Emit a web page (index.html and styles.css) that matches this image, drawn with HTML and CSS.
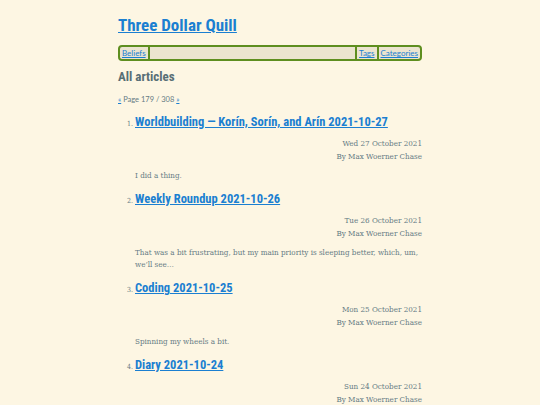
FILE: index.html
```html
<!DOCTYPE html>
<html lang="en">
<head>
<meta charset="utf-8">
<title>Three Dollar Quill</title>
<link rel="stylesheet" href="styles.css">
</head>
<body>
<div class="page">
  <header class="site-header">
    <h1 class="site-title"><a href="#">Three Dollar Quill</a></h1>
    <nav class="nav">
      <a class="nav-item sep-right" href="#">Beliefs</a>
      <span class="nav-fill"></span>
      <a class="nav-item sep-left sep-right" href="#">Tags</a>
      <a class="nav-item" href="#">Categories</a>
    </nav>
  </header>
  <main>
    <h2 class="section-title">All articles</h2>
    <p class="pager"><a href="#">«</a> Page 179 / 308 <a href="#">»</a></p>
    <ol class="articles" start="1">
      <li class="article">
        <h3 class="article-title"><a href="#">Worldbuilding — Korín, Sorín, and Arín 2021-10-27</a></h3>
        <div class="meta"><div>Wed 27 October 2021</div><div>By Max Woerner Chase</div></div>
        <p class="summary">I did a thing.</p>
      </li>
      <li class="article">
        <h3 class="article-title"><a href="#">Weekly Roundup 2021-10-26</a></h3>
        <div class="meta"><div>Tue 26 October 2021</div><div>By Max Woerner Chase</div></div>
        <p class="summary">That was a bit frustrating, but my main priority is sleeping better, which, um, we’ll see…</p>
      </li>
      <li class="article">
        <h3 class="article-title"><a href="#">Coding 2021-10-25</a></h3>
        <div class="meta"><div>Mon 25 October 2021</div><div>By Max Woerner Chase</div></div>
        <p class="summary">Spinning my wheels a bit.</p>
      </li>
      <li class="article">
        <h3 class="article-title"><a href="#">Diary 2021-10-24</a></h3>
        <div class="meta"><div>Sun 24 October 2021</div><div>By Max Woerner Chase</div></div>
        <p class="summary">Another day.</p>
      </li>
    </ol>
  </main>
</div>
</body>
</html>
```

FILE: styles.css
```css
html, body {
  margin: 0;
  padding: 0;
  background: #fdf6e3;
}
body {
  color: #657b83;
  font-family: "DejaVu Serif", serif;
  font-stretch: condensed;
  font-size: 8px;
}
a {
  color: #1b7fd1;
}
.page {
  width: 304px;
  margin: 0 auto;
}
.site-header {
  padding-top: 14px;
}
.site-title {
  margin: 0;
  font-family: Roboto, "Open Sans", sans-serif;
  font-size: 17px;
  line-height: 22px;
  font-weight: 700;
}
.nav {
  margin-top: 9px;
  display: flex;
  height: 12px;
  border: 2px solid #5e8e1f;
  border-radius: 4px;
  background: #ebe4cf;
  font-family: Lato, "Open Sans", sans-serif;
  font-stretch: normal;
  font-size: 8px;
  line-height: 12px;
}
.nav-item {
  padding: 0 2px;
}
.sep-right {
  border-right: 2px solid #5e8e1f;
}
.sep-left {
  border-left: 2px solid #5e8e1f;
}
.nav-fill {
  flex: 1;
}
.section-title {
  margin: 7px 0 0;
  font-family: Roboto, "Open Sans", sans-serif;
  font-size: 13px;
  line-height: 18px;
  font-weight: 700;
  color: #586e75;
}
.pager {
  margin: 8px 0 0;
  font-family: Lato, "Open Sans", sans-serif;
  font-stretch: normal;
  font-size: 7.5px;
  line-height: 12px;
}
.articles {
  margin: 6px 0 0;
  padding-left: 17px;
}
.article::marker {
  font-size: 7px;
}
.article-title {
  margin: 0;
  font-family: Roboto, "Open Sans", sans-serif;
  font-size: 12.5px;
  line-height: 20px;
  font-weight: 700;
}
.meta {
  margin-top: 5px;
  text-align: right;
  line-height: 13px;
}
.summary {
  margin: 7px 0 0;
  line-height: 12px;
  padding-bottom: 7px;
}
```
